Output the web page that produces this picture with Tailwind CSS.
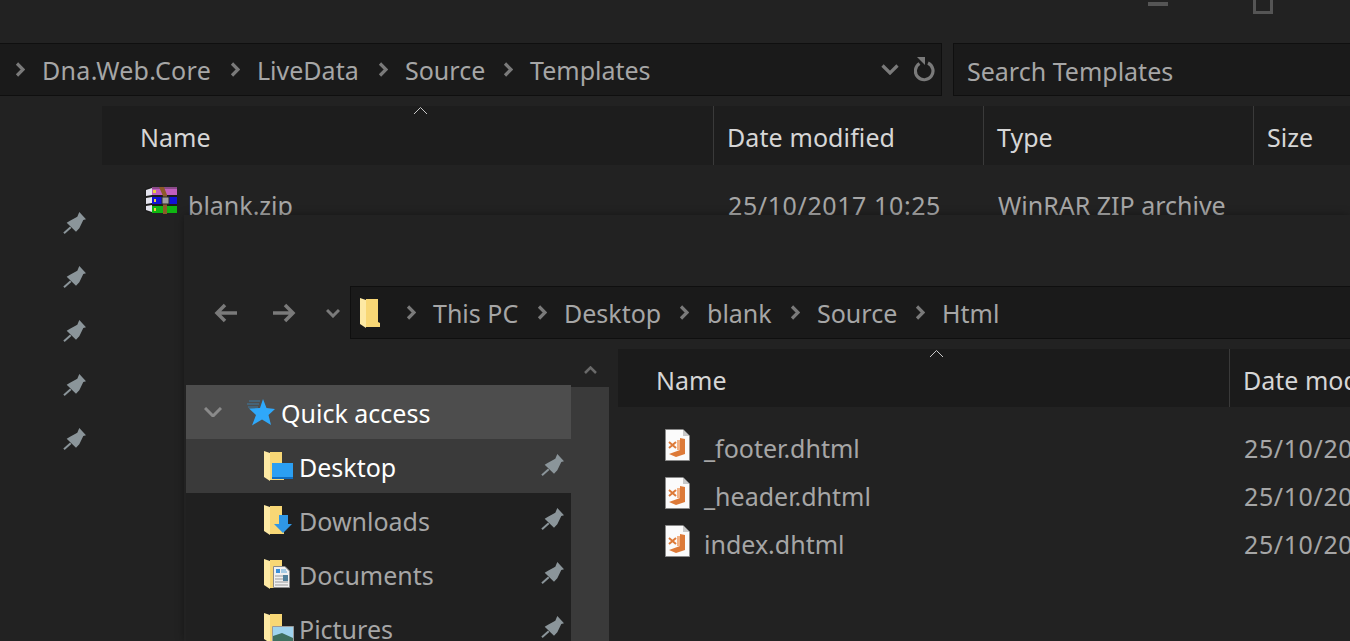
<!DOCTYPE html>
<html lang="en">
<head>
  <meta charset="UTF-8">
  <title>Explorer</title>
  <script src="https://cdn.jsdelivr.net/npm/@tailwindcss/browser@4"></script>
</head>
<body class="w-[1350px] h-[641px] overflow-hidden bg-[#222222] font-['Noto_Sans',sans-serif] text-[25px] text-[#a6a6a6]">
  <svg class="hidden">
    <symbol id="pin" viewBox="0 0 24 24">
      <path fill="#8b959a" d="M17.3 0L24 7.3L21.3 8L17.3 16.3L14 19.7L4.7 10.7L8 8.7L15.3 4.7Z"/>
      <path stroke="#8b959a" stroke-width="2" d="M2 21.3L8.7 15.3"/>
    </symbol>
    <symbol id="chev" viewBox="0 0 10 15">
      <path fill="none" stroke="#7a7a7a" stroke-width="3.200" d="M2 1.500L8 7.500L2 13.500"/>
    </symbol>
    <symbol id="folder" viewBox="0 0 20 30">
      <path fill="#f8d775" d="M4 1H18V24L20 25V29H6V1Z"/>
      <path fill="#fde9a4" d="M0 0L6 2V30L0 26Z"/>
    </symbol>
    <symbol id="page" viewBox="0 0 25 32">
      <path fill="#fbfbfb" stroke="#8a8a8a" d="M0.500 0.500H18L24.500 7V31.500H0.500Z"/>
      <path fill="#c8c8c8" d="M18 0.500L24.500 7H18Z"/>
      <path fill="#dd7a38" d="M4 25L15 21V9L20 10V25L11 28Z"/>
      <path fill="#f2b184" d="M12 11H15V21H12Z"/>
      <path fill="none" stroke="#dd7a38" stroke-width="2" d="M4 13L11 19M4 19L11 13"/>
    </symbol>
  </svg>

  <!-- window behind -->
  <div class="flex h-[641px] flex-col">
    <div class="flex h-[43px] shrink-0 items-start pl-[1148px]">
      <div class="mt-[2px] h-[4px] w-[20px] bg-[#555555]"></div>
      <div class="ml-[85px] h-[14px] w-[20px] border-x-[3px] border-b-[3px] border-[#555555]"></div>
    </div>
    <div class="flex h-[53px] shrink-0 gap-[11px]">
      <div class="flex w-[942px] items-center border-y border-r border-[#0f0f0f] bg-[#1a1a1a] pl-[15px]">
        <svg class="h-[15px] w-[10px] shrink-0"><use href="#chev"/></svg>
        <span class="ml-[17px] w-[188px] pt-[2px] tracking-[0.3px]">Dna.Web.Core</span>
        <svg class="h-[15px] w-[10px] shrink-0"><use href="#chev"/></svg>
        <span class="ml-[17px] w-[121px] pt-[2px]">LiveData</span>
        <svg class="h-[15px] w-[10px] shrink-0"><use href="#chev"/></svg>
        <span class="ml-[17px] w-[98px] pt-[2px]">Source</span>
        <svg class="h-[15px] w-[10px] shrink-0"><use href="#chev"/></svg>
        <span class="ml-[17px] pt-[2px]">Templates</span>
        <svg class="ml-auto h-[11px] w-[18px] shrink-0" viewBox="0 0 18 11"><path fill="none" stroke="#7a7a7a" stroke-width="3.200" d="M1.500 1.500L9 9L16.500 1.500"/></svg>
        <svg class="mr-[6px] ml-[15px] h-[25px] w-[21px] shrink-0" viewBox="0 0 21 25"><path fill="none" stroke="#7a7a7a" stroke-width="3.200" d="M5.500 6.500A8.800 8.800 0 1 0 14 6"/><path fill="#7a7a7a" d="M3 0H11V8Z"/></svg>
      </div>
      <div class="flex flex-1 items-center border-y border-l border-[#0f0f0f] bg-[#1a1a1a] pl-[13px]"><span class="pt-[4px]">Search Templates</span></div>
    </div>
    <div class="mt-[10px] flex">
      <div class="flex w-[102px] shrink-0 flex-col pt-[91px]">
        <div class="flex h-[54px] items-center pl-[62px]"><svg class="h-[24px] w-[24px]"><use href="#pin"/></svg></div>
        <div class="flex h-[54px] items-center pl-[62px]"><svg class="h-[24px] w-[24px]"><use href="#pin"/></svg></div>
        <div class="flex h-[54px] items-center pl-[62px]"><svg class="h-[24px] w-[24px]"><use href="#pin"/></svg></div>
        <div class="flex h-[54px] items-center pl-[62px]"><svg class="h-[24px] w-[24px]"><use href="#pin"/></svg></div>
        <div class="flex h-[54px] items-center pl-[62px]"><svg class="h-[24px] w-[24px]"><use href="#pin"/></svg></div>
      </div>
      <div class="min-w-0 flex-1">
        <div class="relative flex h-[59px] items-center bg-[#1d1d1d] text-[#d6d6d6]">
          <svg class="absolute top-0 left-[311px] h-[9px] w-[15px]" viewBox="0 0 15 9"><path fill="none" stroke="#c8c8c8" d="M1 8L7.500 1.500L14 8"/></svg>
          <div class="w-[611px] pt-[4px] pl-[38px]">Name</div>
          <div class="flex h-full w-[270px] items-center border-l border-[#3a3a3a] pt-[4px] pl-[13px] tracking-[0.1px]">Date modified</div>
          <div class="flex h-full w-[270px] items-center border-l border-[#3a3a3a] pt-[4px] pl-[13px]">Type</div>
          <div class="flex h-full flex-1 items-center border-l border-[#3a3a3a] pt-[4px] pl-[13px]">Size</div>
        </div>
        <div class="mt-[17px] flex h-[48px] items-center">
          <svg class="mb-[12px] ml-[43px] h-[27px] w-[33px] shrink-0" viewBox="0 0 33 27">
            <path fill="#1c1c1c" d="M0 2L5 0H32V26H5L0 24Z"/>
            <path fill="#e4e4ee" d="M1 3L7 1V8L1 9ZM1 11L7 10V16L1 17ZM1 19L7 18V25L1 23Z"/>
            <path fill="#c25fbd" d="M7 1H32V8H7Z"/><path fill="#8a4a88" d="M7 0H32V2H7Z"/>
            <path fill="#1212d6" d="M7 10H32V17H7Z"/>
            <path fill="#0fb612" d="M7 19H32V26H7Z"/>
            <path fill="#e8d040" d="M8 3H11V6H8ZM9 12H11V15H9ZM9 21H11V24H9Z"/>
            <path fill="#8c5a28" d="M14 0H19L22 8V27H18V9Z"/>
            <path fill="#a0a0a0" stroke="#2a2a2a" d="M17 10H24V17H17Z"/>
          </svg>
          <span class="ml-[10px] w-[540px] shrink-0">blank.zip</span>
          <span class="w-[270px] shrink-0 tracking-[0.6px]">25/10/2017 10:25</span>
          <span>WinRAR ZIP archive</span>
        </div>
      </div>
    </div>
  </div>

  <!-- window in front -->
  <div class="absolute top-[215px] right-0 bottom-0 left-[184px] overflow-hidden bg-[#222222] shadow-[0_0_8px_rgba(0,0,0,0.35)]">
    <div class="mt-[71px] flex h-[53px] items-center">
      <svg class="ml-[30px] h-[20px] w-[24px] shrink-0" viewBox="0 0 24 20"><path fill="none" stroke="#7a7a7a" stroke-width="3.500" d="M23 10H3M11 2L3 10L11 18"/></svg>
      <svg class="ml-[34px] h-[20px] w-[24px] shrink-0" viewBox="0 0 24 20"><path fill="none" stroke="#7a7a7a" stroke-width="3.500" d="M1 10H21M13 2L21 10L13 18"/></svg>
      <svg class="ml-[30px] h-[10px] w-[14px] shrink-0" viewBox="0 0 14 10"><path fill="none" stroke="#7a7a7a" stroke-width="3" d="M1 2L7 8L13 2"/></svg>
      <div class="ml-[10px] flex h-full flex-1 items-center border-y border-l border-[#0f0f0f] bg-[#1a1a1a] pl-[9px]">
        <svg class="h-[30px] w-[20px] shrink-0"><use href="#folder"/></svg>
        <svg class="ml-[26px] h-[15px] w-[10px] shrink-0"><use href="#chev"/></svg>
        <span class="ml-[17px] w-[104px] pt-[2px]">This PC</span>
        <svg class="h-[15px] w-[10px] shrink-0"><use href="#chev"/></svg>
        <span class="ml-[17px] w-[115px] pt-[2px]">Desktop</span>
        <svg class="h-[15px] w-[10px] shrink-0"><use href="#chev"/></svg>
        <span class="ml-[18px] w-[83px] pt-[2px]">blank</span>
        <svg class="h-[15px] w-[10px] shrink-0"><use href="#chev"/></svg>
        <span class="ml-[17px] w-[98px] pt-[2px]">Source</span>
        <svg class="h-[15px] w-[10px] shrink-0"><use href="#chev"/></svg>
        <span class="ml-[17px] pt-[2px]">Html</span>
      </div>
    </div>
    <div class="flex">
      <div class="ml-[2px] w-[385px] shrink-0 pt-[46px]">
        <div class="flex h-[54px] items-center bg-[#4d4d4d] text-white">
          <svg class="ml-[18px] h-[10px] w-[18px] shrink-0" viewBox="0 0 18 10"><path fill="none" stroke="#8a8a8a" stroke-width="3" d="M1 1L9 9L17 1"/></svg>
          <svg class="ml-[25px] h-[27px] w-[29px] shrink-0" viewBox="0 0 29 27">
            <path fill="#2fa8fa" d="M16 0L19.500 9L28 10L21.500 16L24 26L15 20.500L5 26.500L9 16L2 9.500L13 9Z"/>
            <path stroke="#2fa8fa" stroke-opacity="0.5" d="M2 2H13M0 5H12M1 8H11"/>
          </svg>
          <span class="ml-[5px] pt-[4px]">Quick access</span>
        </div>
        <div class="flex h-[54px] items-center bg-[#3a3a3a] pl-[78px] text-white">
          <svg class="h-[30px] w-[30px] shrink-0" viewBox="0 0 30 30">
            <use href="#folder" width="20" height="30"/>
            <path fill="#2b9ff2" d="M8 12H29V27H8Z"/><path fill="#0e6cc0" d="M8 26H29V28H8Z"/>
          </svg>
          <span class="ml-[5px] pt-[4px]">Desktop</span>
          <svg class="mr-[7px] ml-auto h-[24px] w-[24px] shrink-0"><use href="#pin"/></svg>
        </div>
        <div class="flex h-[54px] items-center bg-[#202020] pl-[78px]">
          <svg class="h-[30px] w-[30px] shrink-0" viewBox="0 0 30 30">
            <use href="#folder" width="20" height="30"/>
            <path fill="#2f97e6" d="M15 10H24V19H28L19 28L10 19H15Z"/>
          </svg>
          <span class="ml-[5px] pt-[4px]">Downloads</span>
          <svg class="mr-[7px] ml-auto h-[24px] w-[24px] shrink-0"><use href="#pin"/></svg>
        </div>
        <div class="flex h-[54px] items-center bg-[#202020] pl-[78px]">
          <svg class="h-[30px] w-[30px] shrink-0" viewBox="0 0 30 30">
            <use href="#folder" width="20" height="30"/>
            <path fill="#f0f0f0" stroke="#8a8a8a" d="M9.500 7.500H21L25.500 12V28.500H9.500Z"/>
            <path fill="#3a8fd8" d="M12 10H16V14H12Z"/><path stroke="#5aa5d8" d="M17 11H22M17 13H23"/>
            <path stroke="#9a9a9a" d="M11 17H19M11 20H19M11 23H24M11 26H24"/><path fill="#4f7f9a" d="M19 16H24V22H19Z"/>
          </svg>
          <span class="ml-[5px] pt-[4px]">Documents</span>
          <svg class="mr-[7px] ml-auto h-[24px] w-[24px] shrink-0"><use href="#pin"/></svg>
        </div>
        <div class="flex h-[54px] items-center bg-[#202020] pl-[78px]">
          <svg class="h-[30px] w-[30px] shrink-0" viewBox="0 0 30 30">
            <use href="#folder" width="20" height="30"/>
            <path fill="#9fd3ee" stroke="#9a9a9a" d="M8.500 13.500H29.500V30H8.500Z"/><path fill="#3f6f5f" d="M9 23L18 20L29 25V30H9Z"/>
          </svg>
          <span class="ml-[5px] pt-[4px]">Pictures</span>
          <svg class="mr-[7px] ml-auto h-[24px] w-[24px] shrink-0"><use href="#pin"/></svg>
        </div>
      </div>
      <div class="flex h-[302px] w-[38px] shrink-0 flex-col">
        <div class="flex h-[48px] items-start justify-center pt-[27px]">
          <svg class="h-[8px] w-[13px]" viewBox="0 0 13 8"><path fill="none" stroke="#6a6a6a" stroke-width="2.500" d="M1 7L6.500 1.500L12 7"/></svg>
        </div>
        <div class="flex-1 bg-[#3a3a3a]"></div>
      </div>
      <div class="ml-[9px] min-w-0 flex-1 overflow-hidden pt-[10px]">
        <div class="relative flex h-[58px] items-center bg-[#1b1b1b] text-[#d6d6d6]">
          <svg class="absolute top-0 left-[311px] h-[9px] w-[15px]" viewBox="0 0 15 9"><path fill="none" stroke="#c8c8c8" d="M1 8L7.500 1.500L14 8"/></svg>
          <div class="w-[611px] shrink-0 pt-[6px] pl-[38px]">Name</div>
          <div class="flex h-full flex-1 items-center border-l border-[#3a3a3a] pt-[6px] pl-[13px] whitespace-nowrap">Date modified</div>
        </div>
        <div class="pt-[18px]">
          <div class="flex h-[48px] items-center pl-[47px]">
            <svg class="mb-[8px] h-[32px] w-[25px] shrink-0"><use href="#page"/></svg>
            <span class="ml-[14px] w-[540px] shrink-0">_footer.dhtml</span>
            <span class="shrink-0 tracking-[0.6px] whitespace-nowrap">25/10/2017</span>
          </div>
          <div class="flex h-[48px] items-center pl-[47px]">
            <svg class="mb-[8px] h-[32px] w-[25px] shrink-0"><use href="#page"/></svg>
            <span class="ml-[14px] w-[540px] shrink-0">_header.dhtml</span>
            <span class="shrink-0 tracking-[0.6px] whitespace-nowrap">25/10/2017</span>
          </div>
          <div class="flex h-[48px] items-center pl-[47px]">
            <svg class="mb-[8px] h-[32px] w-[25px] shrink-0"><use href="#page"/></svg>
            <span class="ml-[14px] w-[540px] shrink-0">index.dhtml</span>
            <span class="shrink-0 tracking-[0.6px] whitespace-nowrap">25/10/2017</span>
          </div>
        </div>
      </div>
    </div>
  </div>
</body>
</html>
